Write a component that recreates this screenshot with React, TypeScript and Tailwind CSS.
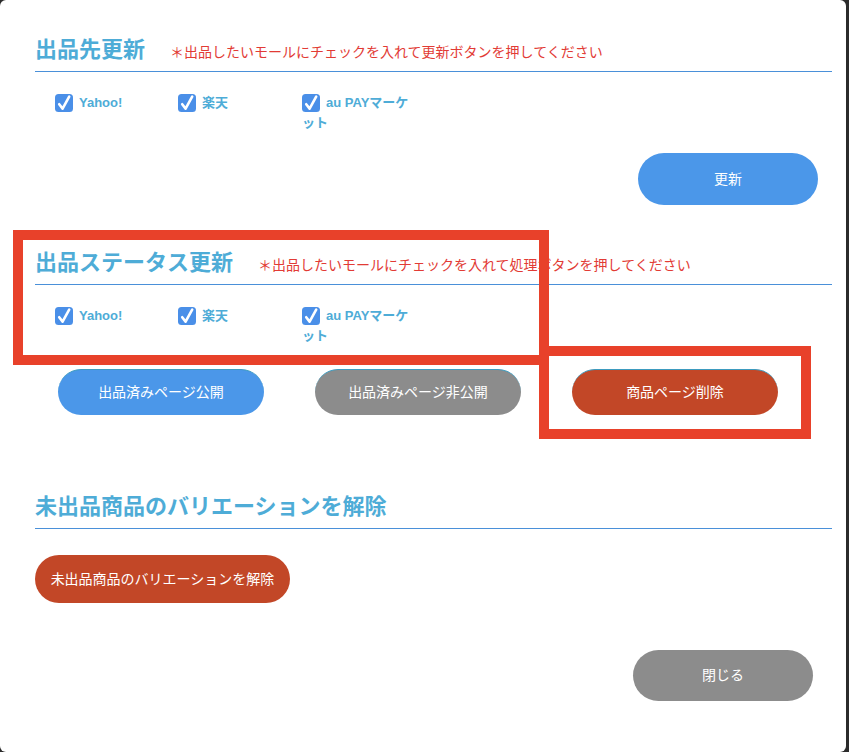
import { ReactNode } from 'react';

const CheckIcon = () => (
  <svg width="18" height="18" viewBox="0 0 18 18" className="inline-block align-top mt-px mr-[6px]">
    <rect x="0" y="0" width="18" height="18" rx="3.5" fill="#4a8fe8" />
    <path d="M4.2 10.2 L7.6 14.6 L14.2 2.6" fill="none" stroke="#ffffff" strokeWidth="2.6" strokeLinecap="round" strokeLinejoin="round" />
  </svg>
);

const SectionHeading = ({ title, note }: { title: string; note?: string }) => (
  <div className="flex items-baseline border-b border-[#4a90d9] pb-[6px]">
    <h2 className="text-[22px] leading-[30px] font-bold text-[#4eacd7]">{title}</h2>
    {note && <span className="ml-[25px] text-[14px] text-[#e23b35]">{note}</span>}
  </div>
);

const Malls = () => (
  <div className="mt-[21px] pl-[20px] grid grid-cols-[123px_124px_115px] text-[13px] leading-[20px] font-bold text-[#4eacd7]">
    {['Yahoo!', '楽天', 'au PAYマーケット'].map((m) => (
      <label key={m} className="block">
        <CheckIcon />
        {m}
      </label>
    ))}
  </div>
);

const Pill = ({ children, className }: { children: ReactNode; className: string }) => (
  <button className={`rounded-full text-white text-[14px] flex items-center justify-center ${className}`}>{children}</button>
);

const App = () => {
  return (
    <div className="bg-[#2b2b2b] h-[752px] w-[849px]" style={{ fontFamily: '"Liberation Sans", "Noto Sans CJK JP", sans-serif' }}>
      <div className="relative bg-white w-[846px] h-[752px] rounded-[6px] pt-[35px] pl-[35px] pr-[14px]">
        <SectionHeading title="出品先更新" note="＊出品したいモールにチェックを入れて更新ボタンを押してください" />
        <Malls />
        <div className="flex justify-end mt-[20px] pr-[14px]">
          <Pill className="w-[180px] h-[52px] bg-[#4b97e9]">更新</Pill>
        </div>

        <div className="mt-[43px]">
          <SectionHeading title="出品ステータス更新" note="＊出品したいモールにチェックを入れて処理ボタンを押してください" />
        </div>
        <Malls />
        <div className="flex gap-[51px] pl-[23px] mt-[23px]">
          <Pill className="w-[206px] h-[46px] bg-[#4b97e9] border-t border-[#3d9bbf]">出品済みページ公開</Pill>
          <Pill className="w-[206px] h-[46px] bg-[#8c8c8c] border-t border-[#3d9bbf]">出品済みページ非公開</Pill>
          <Pill className="w-[206px] h-[46px] bg-[#c24727] border-t border-[#3d9bbf]">商品ページ削除</Pill>
        </div>

        <div className="mt-[77px]">
          <SectionHeading title="未出品商品のバリエーションを解除" />
        </div>
        <div className="mt-[26px]">
          <Pill className="w-[255px] h-[48px] bg-[#c24727]">未出品商品のバリエーションを解除</Pill>
        </div>

        <div className="flex justify-end mt-[47px] pr-[19px]">
          <Pill className="w-[180px] h-[51px] bg-[#8c8c8c]">閉じる</Pill>
        </div>

        {/* annotation boxes */}
        <div className="absolute left-[13px] top-[230px] w-[536px] h-[135px] border-[10px] border-[#e8412a]" />
        <div className="absolute left-[539px] top-[346px] w-[272px] h-[93px] border-[10px] border-[#e8412a]" />
      </div>
    </div>
  );
};

export default App;
